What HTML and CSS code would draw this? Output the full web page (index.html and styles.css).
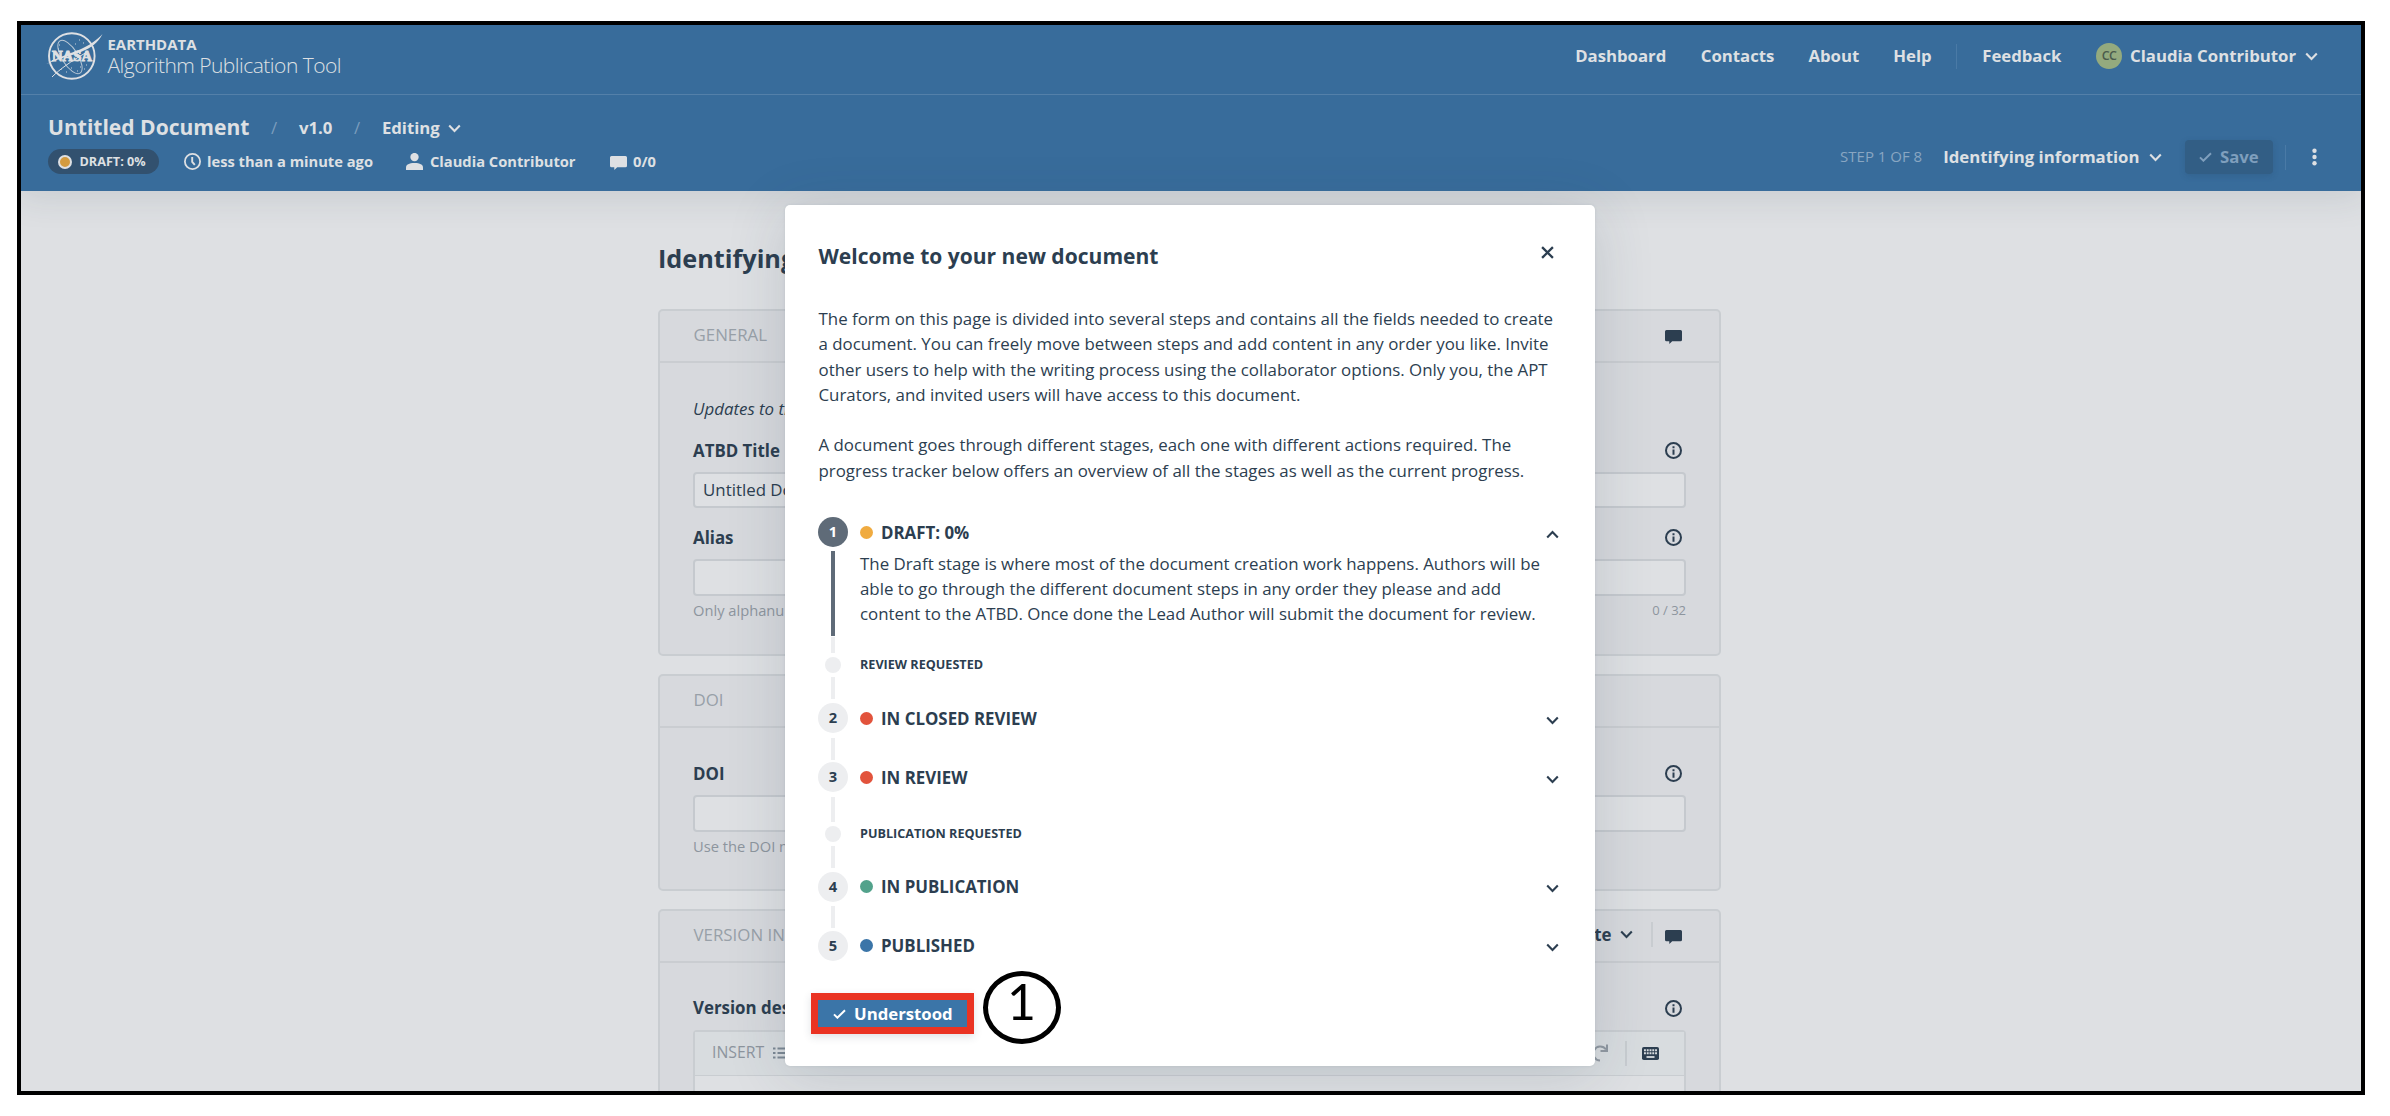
FILE: index.html
```
<!DOCTYPE html>
<html lang="en">
<head>
<meta charset="utf-8">
<title>Untitled Document - Algorithm Publication Tool</title>
<link rel="stylesheet" href="styles.css">
</head>
<body>
<svg class="sprite" aria-hidden="true">
  <symbol id="i-down" viewBox="0 0 13 9"><path d="M1.2 1.6 6.5 7l5.3-5.4" fill="none" stroke="currentColor" stroke-width="2.1"/></symbol>
  <symbol id="i-up" viewBox="0 0 13 9"><path d="M1.2 7.4 6.5 2l5.3 5.4" fill="none" stroke="currentColor" stroke-width="2.1"/></symbol>
  <symbol id="i-check" viewBox="0 0 13 10"><path d="M1 5.4 4.4 8.7 12 1.2" fill="none" stroke="currentColor" stroke-width="2"/></symbol>
  <symbol id="i-comment" viewBox="0 0 17 14"><path d="M1.5 0h14A1.5 1.5 0 0 1 17 1.500v8.200a1.500 1.500 0 0 1-1.500 1.500H7.200L4.300 14v-2.800H1.500A1.500 1.500 0 0 1 0 9.700V1.500A1.500 1.500 0 0 1 1.500 0z" fill="currentColor"/></symbol>
  <symbol id="i-info" viewBox="0 0 17 17"><circle cx="8.500" cy="8.500" r="7.500" fill="none" stroke="currentColor" stroke-width="2"/><path d="M7.500 4.300h2v1.900h-2zM7.500 7.500h2v5.200h-2z" fill="currentColor"/></symbol>
</svg>
<div class="frame">
  <header class="head">
    <div class="bar">
      <div class="brand">
        <svg class="logo" viewBox="0 0 58 50">
          <circle cx="25.800" cy="25" r="22.800" fill="none" stroke="#dee0e3" stroke-width="1.900"/>
          <ellipse cx="24" cy="26" rx="8" ry="19" transform="rotate(-32 24 26)" fill="none" stroke="#b9c8d6" stroke-width="1"/>
          <path d="M56.500 3C52 12 45 17 36 20.500 24 25 12 28 .5 33 12 25.500 24 23 34 18.500 44 14 51 9 56.500 3z" fill="#dee0e3"/>
          <path d="M6 46C14 38 24 31 41 21" fill="none" stroke="#dee0e3" stroke-width="1"/>
          <path d="M13 14h1M33 9h1M37 12h1M15 38h1M20 41h1M34 36h1M40 34h1M31 40h1M12 18h1M29 13h1M38 38h1M25 37h1" stroke="#c9d2db" stroke-width="1"/>
          <text x="6" y="30" class="logo-text" textLength="40" lengthAdjust="spacingAndGlyphs">NASA</text>
        </svg>
        <div class="brand-text"><b>EARTHDATA</b><span>Algorithm Publication Tool</span></div>
      </div>
      <nav class="nav">
        <a>Dashboard</a><a>Contacts</a><a>About</a><a>Help</a>
        <i class="rule"></i>
        <a>Feedback</a>
        <span class="user"><span class="avatar">CC</span>Claudia Contributor<svg class="chev"><use href="#i-down"/></svg></span>
      </nav>
    </div>
    <div class="doc">
      <div class="doc-info">
        <div class="crumbs">
          <h1>Untitled Document</h1><i>/</i><b>v1.0</b><i>/</i><b>Editing</b><svg class="chev"><use href="#i-down"/></svg>
        </div>
        <div class="meta">
          <span class="pill"><i></i>DRAFT: 0%</span>
          <span class="m-time"><svg width="17" height="17" viewBox="0 0 17 17"><circle cx="8.500" cy="8.500" r="7.600" fill="none" stroke="currentColor" stroke-width="1.800"/><path d="M8.200 4v4.800l2.600 3.100" fill="none" stroke="currentColor" stroke-width="1.900"/></svg>less than a minute ago</span>
          <span class="m-user"><svg width="17" height="17" viewBox="0 0 17 17"><ellipse cx="8.500" cy="4.100" rx="4.200" ry="4.200" fill="currentColor"/><path d="M0 17v-2.500C0 11.500 3 10 8.500 10s8.500 1.500 8.500 4.500V17z" fill="currentColor"/></svg>Claudia Contributor</span>
          <span class="m-comment"><svg width="17" height="14"><use href="#i-comment"/></svg>0/0</span>
        </div>
      </div>
      <div class="doc-actions">
        <span class="step">STEP 1 OF 8</span>
        <b>Identifying information</b><svg class="chev"><use href="#i-down"/></svg>
        <span class="save"><svg class="check"><use href="#i-check"/></svg>Save</span>
        <i class="rule"></i>
        <svg class="dots" viewBox="0 0 5 18"><circle cx="2.500" cy="2.700" r="2.200"/><circle cx="2.500" cy="9" r="2.200"/><circle cx="2.500" cy="15.300" r="2.200"/></svg>
      </div>
    </div>
  </header>

  <main class="page">
    <h2>Identifying</h2>
    <section class="card general">
      <div class="card-head"><span>GENERAL</span><svg class="cm"><use href="#i-comment"/></svg></div>
      <div class="card-body">
        <em>Updates to th</em>
        <div class="label">ATBD Title<svg><use href="#i-info"/></svg></div>
        <div class="input">Untitled Do</div>
        <div class="label second">Alias<svg><use href="#i-info"/></svg></div>
        <div class="input"></div>
        <div class="help"><span>Only alphanu</span><span class="count">0 / 32</span></div>
      </div>
    </section>
    <section class="card doi">
      <div class="card-head"><span>DOI</span></div>
      <div class="card-body">
        <div class="label">DOI<svg><use href="#i-info"/></svg></div>
        <div class="input"></div>
        <div class="help"><span>Use the DOI n</span></div>
      </div>
    </section>
    <section class="card version">
      <div class="card-head"><span>VERSION IN</span><b>ete</b><svg class="chev"><use href="#i-down"/></svg><i class="rule"></i><svg class="cm"><use href="#i-comment"/></svg></div>
      <div class="card-body">
        <div class="label">Version des<svg><use href="#i-info"/></svg></div>
        <div class="editor">
          <div class="tools"><span>INSERT</span><svg width="15" height="12" viewBox="0 0 15 12"><path d="M0 1.500h2.500M0 6h2.500M0 10.500h2.500M4.500 1.500H15M4.500 6H15M4.500 10.500H15" stroke="#7c8894" stroke-width="2"/></svg>
            <svg class="redo" width="18" height="18" viewBox="0 0 18 18"><path d="M15 5.500A7 7 0 1 0 9 16.500" fill="none" stroke="#9098a1" stroke-width="2"/><path d="M16 .5v6.500H9.500" fill="none" stroke="#9098a1" stroke-width="2"/></svg>
            <i class="rule"></i>
            <svg width="17" height="13" viewBox="0 0 17 13"><rect width="17" height="13" rx="1.800" fill="#2c3e50"/><path d="M2 3.300h13M2 6.300h13" stroke="#d8dcdf" stroke-width="2" stroke-dasharray="1.900 .87"/><path d="M4.500 10h8" stroke="#d8dcdf" stroke-width="1.800"/></svg>
          </div>
        </div>
      </div>
    </section>
  </main>

  <div class="modal">
    <div class="modal-head"><h3>Welcome to your new document</h3><svg class="close" viewBox="0 0 12 12"><path d="M1 1l10 10M11 1 1 11" stroke="#2c3e50" stroke-width="2.100"/></svg></div>
    <p>The form on this page is divided into several steps and contains all the fields needed to create<br>a document. You can freely move between steps and add content in any order you like. Invite<br>other users to help with the writing process using the collaborator options. Only you, the APT<br>Curators, and invited users will have access to this document.</p>
    <p>A document goes through different stages, each one with different actions required. The<br>progress tracker below offers an overview of all the stages as well as the current progress.</p>
    <ol class="tracker">
      <li class="stage active">
        <div class="rail"><span class="num">1</span><i class="line"></i></div>
        <div class="stage-main"><div class="stage-title"><i class="dot amber"></i>DRAFT: 0%<svg class="chev"><use href="#i-up"/></svg></div>
        <div class="desc">The Draft stage is where most of the document creation work happens. Authors will be<br>able to go through the different document steps in any order they please and add<br>content to the ATBD. Once done the Lead Author will submit the document for review.</div></div>
      </li>
      <li class="mid first"><div class="rail"><i class="line before"></i><i class="bead"></i><i class="line"></i></div><span>REVIEW REQUESTED</span></li>
      <li class="stage"><div class="rail"><span class="num">2</span><i class="line"></i></div><div class="stage-title"><i class="dot red"></i>IN CLOSED REVIEW<svg class="chev"><use href="#i-down"/></svg></div></li>
      <li class="stage"><div class="rail"><span class="num">3</span></div><div class="stage-title"><i class="dot red"></i>IN REVIEW<svg class="chev"><use href="#i-down"/></svg></div></li>
      <li class="mid"><div class="rail"><i class="line before"></i><i class="bead"></i><i class="line"></i></div><span>PUBLICATION REQUESTED</span></li>
      <li class="stage"><div class="rail"><span class="num">4</span><i class="line"></i></div><div class="stage-title"><i class="dot green"></i>IN PUBLICATION<svg class="chev"><use href="#i-down"/></svg></div></li>
      <li class="stage"><div class="rail"><span class="num">5</span></div><div class="stage-title"><i class="dot blue"></i>PUBLISHED<svg class="chev"><use href="#i-down"/></svg></div></li>
    </ol>
    <div class="actions">
      <span class="confirm"><svg class="check"><use href="#i-check"/></svg>Understood</span>
      <span class="callout">1</span>
    </div>
  </div>
</div>
</body>
</html>
```
FILE: styles.css
```
* { box-sizing: border-box; }
body { margin: 0; padding: 21px 0 0 17px; background: #fff; color: #2c3e50; font: 16.87px/25.25px "Open Sans", "Noto Sans", sans-serif; overflow: hidden; }
h1, h2, h3, p, ol { margin: 0; padding: 0; font-size: inherit; }
i { font-style: normal; }
b { font-weight: 700; }
svg { display: block; flex: none; }
.sprite { position: absolute; width: 0; height: 0; }
.frame { position: relative; width: 2348px; height: 1074px; border: 4px solid #000; overflow: hidden; background: #dee0e3; }
.chev { width: 13px; height: 9px; }
.check { width: 13px; height: 10px; }
.rule { width: 1px; height: 25px; background: #4a7aa6; }

/* Header */
.head { position: relative; background: #386c9b; color: #dee0e3; font-size: 16.75px; font-weight: 700; height: 166px; box-shadow: 0 0 34px 4px rgba(44, 62, 80, .14); }
.bar { display: flex; justify-content: space-between; height: 70px; padding: 0 43px 7px 24.500px; border-bottom: 1px solid #5480a9; align-items: center; }
.brand { display: flex; align-items: center; }
.logo { width: 58px; height: 50px; margin-right: 4px; }
.logo-text { font: 700 14px "Liberation Serif", serif; fill: #dee0e3; stroke: #dee0e3; stroke-width: .9px; }
.brand-text { display: flex; flex-direction: column; }
.brand-text b { font-size: 14.950px; line-height: 18px; }
.brand-text span { font-size: 21px; line-height: 25px; font-weight: 300; letter-spacing: -.52px; white-space: nowrap; }
.nav { display: flex; align-items: center; }
.nav a { margin-right: 34.500px; }
.nav a:nth-of-type(2), .nav a:nth-of-type(3) { margin-right: 34px; }
.nav a:nth-of-type(4) { margin-right: 24px; }
.nav .rule { margin-right: 25.500px; }
.user { display: flex; align-items: center; }
.user .chev { margin-left: 9px; }
.avatar { width: 26px; height: 26px; border-radius: 50%; background: #94aa7e; color: #4a5a4c; font-size: 12.500px; font-weight: 600; letter-spacing: -.6px; line-height: 26px; text-align: center; margin-right: 8px; }
.doc { display: flex; justify-content: space-between; padding: 19px 44px 0 27px; }
.crumbs { display: flex; align-items: center; height: 28px; }
.crumbs h1 { font-size: 21.050px; }
.crumbs i { width: 8px; margin: 0 20px 0 21.500px; color: #7b9cbd; font-weight: 400; }
.crumbs .chev { margin-left: 8px; }
.meta { display: flex; align-items: center; height: 25px; margin-top: 7px; font-size: 14.700px; }
.meta span { display: flex; align-items: center; }
.meta .pill { width: 111px; height: 25px; padding-left: 10px; border-radius: 13px; background: #32516f; font-size: 12.630px; margin-right: 24.500px; }
.pill i { width: 14px; height: 14px; border-radius: 50%; border: 2px solid #dee0e3; background: #d39b40; margin-right: 7.500px; }
.m-time svg, .m-user svg { margin-right: 6.500px; }
.m-time { margin-right: 33.500px; }
.m-user { margin-right: 34.500px; }
.m-comment svg { margin: 2px 6px 0 0; }
.doc-actions { display: flex; align-items: center; height: 34px; margin-top: 26px; }
.step { font-size: 15px; font-weight: 400; color: #89a6c2; margin-right: 21px; }
.doc-actions .chev { margin-left: 9px; }
.save { display: flex; align-items: center; width: 88px; height: 34px; margin: 0 12.500px 0 23px; padding-left: 14.500px; border-radius: 4px; background: #325e85; color: #7f9fbd; box-shadow: 0 2px 6px rgba(30, 60, 90, .18); }
.save .check { margin-right: 8px; }
.dots { width: 5px; height: 18px; margin-left: 26px; fill: #dee0e3; }

/* Form behind the dialog */
.page { width: 1063px; margin-left: 637px; }
.page h2 { font-size: 25.250px; line-height: 34px; padding-top: 50px; height: 118px; }
.card { border: 2px solid #c9cdd1; border-radius: 5px; background: #d7d9dd; margin-bottom: 18px; }
.general { height: 347px; }
.doi { height: 216.500px; }
.version { height: 300px; }
.card-head { display: flex; align-items: center; height: 52px; padding: 0 37px 2px 33.500px; border-bottom: 2px solid #cacdd1; color: #98a0a8; }
.card-head span { margin-right: auto; }
.card-head .cm { width: 17px; height: 14px; margin-top: 4px; color: #2c3e50; }
.card-head b, .card-head .chev { color: #2c3e50; }
.card-head .chev { margin-left: 8px; }
.card-head .rule, .tools .rule { background: #c8ccd0; width: 2px; }
.card-head .rule { margin: 0 12px 0 18.500px; }
.card-body { padding: 33px 33px 0 33px; }
.card-body em { display: block; white-space: nowrap; margin-bottom: 16.500px; }
.label { display: flex; justify-content: space-between; align-items: center; font-weight: 700; padding-right: 4px; height: 25px; margin-bottom: 9px; }
.label svg { width: 17px; height: 17px; }
.label.second { margin-top: 17px; }
.input { height: 36.500px; border: 2px solid #c5c9ce; border-radius: 4px; background: #dee0e3; padding: 3px 8px; }
.input + .label { margin-top: 17px; }
.help { display: flex; justify-content: space-between; font-size: 14.700px; color: #8d959e; margin-top: 2px; }
.help .count { font-size: 13px; }
.editor { height: 200px; border: 2px solid #c9cdd1; border-radius: 4px; background: #dee0e3; }
.tools { display: flex; align-items: center; height: 44px; padding: 0 25px 0 17px; border-bottom: 1.500px solid #c9cdd1; background: #d8dcdf; color: #8d959e; }
.tools span { font-size: 15.800px; margin-right: 12px; width: 49px; }
.tools .redo { margin: 0 16.500px 0 auto; }
.tools .rule { margin-right: 15px; }

/* Dialog */
.modal { position: absolute; left: 764px; top: 180px; width: 810px; height: 861px; padding: 33px 33.500px 0; border-radius: 5px; background: #fff; box-shadow: 0 8px 60px rgba(44, 62, 80, .16), 0 0 3px rgba(44, 62, 80, .1); }
.modal-head { display: flex; justify-content: space-between; padding-right: 8px; margin-bottom: 33px; height: 35px; }
.modal-head h3 { font-size: 21.050px; line-height: 37px; }
.close { width: 13px; height: 13px; margin-top: 8px; }
.modal p { white-space: nowrap; margin-bottom: 25.250px; }
.tracker { list-style: none; margin: 34.500px 0 0 -.5px; }
.stage { display: flex; height: 59px; }
.stage.active { height: 119.500px; }
.rail { width: 30px; margin-right: 12px; display: flex; flex-direction: column; align-items: center; flex: none; }
.num { width: 30px; height: 30px; border-radius: 50%; background: #edeef0; font-size: 14.700px; line-height: 29px; font-weight: 700; text-align: center; }
.line { width: 4px; height: 22px; margin-top: 4.500px; background: #edeef0; }
.active .num { background: #5f6b78; color: #fff; }
.active .line { height: 85px; margin-top: 4px; background: #5f6b78; }
.stage-title { display: flex; align-items: center; flex: 1; height: 30px; font-weight: 700; }
.stage-title .chev { margin: 4px 3px 0 auto; }
.stage-main { flex: 1; }
.dot { width: 13px; height: 13px; border-radius: 50%; margin-right: 8px; }
.amber { background: #f0ab40; }
.red { background: #e2533c; }
.green { background: #52a28b; }
.blue { background: #3b75a8; }
.desc { white-space: nowrap; margin-top: 3.500px; }
.mid { display: flex; height: 66px; }
.mid.first { height: 66.500px; }
.mid .before { height: 16px; margin: 0 0 4px; }
.mid span { font-size: 12.630px; font-weight: 700; padding-top: 15px; }
.mid:not(.first) { margin-top: -24.500px; height: 75px; }
.mid:not(.first) .before { height: 25px; }
.mid:not(.first) span { padding-top: 24.500px; }
.bead { width: 16px; height: 16px; border-radius: 50%; background: #edeef0; }
.actions { display: flex; align-items: flex-start; margin: -18.500px 0 0 -7.500px; }
.confirm { display: flex; align-items: center; width: 163px; height: 41px; margin-top: 22px; border: 7px solid #ea3323; background: #3b75a8; color: #fff; font-size: 16.75px; font-weight: 700; padding-left: 15px; box-shadow: 0 3px 8px rgba(44, 62, 80, .15); }
.confirm .check { margin-right: 8px; }
.callout { width: 78px; height: 73px; margin-left: 8.500px; border: 5px solid #000; border-radius: 50%; color: #000; font: 50px/51px Lato, sans-serif; text-align: center; }
```
